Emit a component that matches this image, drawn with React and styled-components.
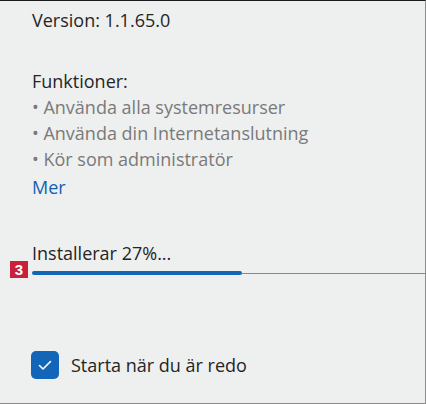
import React from "react"
import styled, { createGlobalStyle } from "styled-components"

const GlobalStyle = createGlobalStyle`
  html, body {
    margin: 0;
    padding: 0;
    background: #eeefef;
  }
  body {
    font-family: "Open Sans", "Noto Sans", "Liberation Sans", sans-serif;
  }
`

const Panel = styled.div`
  width: 426px;
  height: 404px;
  box-sizing: border-box;
  background: #eeefef;
  border-top: 1px solid #1a1a1a;
  border-right: 1px solid #8c8c8c;
  border-bottom: 1px solid #8c8c8c;
  display: flex;
  flex-direction: column;
  color: #252525;
  font-size: 18px;
  line-height: 26px;
`

const Section = styled.div`
  padding-left: 32px;
  margin-top: ${props => props.gap || 0}px;
`

const Line = styled.div`
  color: ${props => props.muted ? "#7a7a7a" : "#252525"};
  white-space: nowrap;
`

const MoreLink = styled.a`
  color: #1361b2;
  text-decoration: none;
  display: block;
  margin-top: 2px;
`

const Progress = styled.div`
  margin-top: ${props => props.gap}px;
  position: relative;
`

const ProgressLabel = styled.div`
  padding-left: 32px;
`

const Track = styled.div`
  margin-left: 32px;
  margin-top: 5px;
  height: 4px;
  display: flex;
  align-items: center;
`

const Fill = styled.div`
  height: 4px;
  background: #1266b6;
  border-radius: 2px;
`

const Rest = styled.div`
  flex: 1;
  height: 1px;
  background: #8a8a8a;
`

const Badge = styled.span`
  position: absolute;
  left: 10px;
  top: 21px;
  width: 18px;
  height: 17px;
  background: #c9213b;
  color: #fff;
  font-family: "Liberation Sans", Arial, sans-serif;
  font-weight: 700;
  font-size: 15px;
  line-height: 17px;
  text-align: center;
`

const CheckRow = styled.label`
  margin-top: ${props => props.gap}px;
  padding-left: 31px;
  display: flex;
  align-items: center;
  gap: 12px;
`

const Box = styled.span`
  width: 28px;
  height: 28px;
  border-radius: 5px;
  background: #1265b7;
  display: flex;
  align-items: center;
  justify-content: center;
`

export default function App() {
  const percent = 27
  return (
    <>
      <GlobalStyle />
      <Panel>
        <Section gap={6}>
          <Line>Version: 1.1.65.0</Line>
        </Section>
        <Section gap={35}>
          <Line>Funktioner:</Line>
          <Line muted>• Använda alla systemresurser</Line>
          <Line muted>• Använda din Internetanslutning</Line>
          <Line muted>• Kör som administratör</Line>
          <MoreLink href="#">Mer</MoreLink>
        </Section>
        <Progress gap={40}>
          <ProgressLabel>Installerar {percent}%...</ProgressLabel>
          <Badge>3</Badge>
          <Track>
            <Fill style={{ width: `${(percent / 100) * 776}px` }} />
            <Rest />
          </Track>
        </Progress>
        <CheckRow gap={76}>
          <Box>
            <svg width="16" height="16" viewBox="0 0 16 16" fill="none">
              <path d="M2.5 8.5l3.5 3.5 7.5-7.5" stroke="#fff" strokeWidth="1.6" strokeLinecap="round" strokeLinejoin="round" />
            </svg>
          </Box>
          <span>Starta när du är redo</span>
        </CheckRow>
      </Panel>
    </>
  )
}
